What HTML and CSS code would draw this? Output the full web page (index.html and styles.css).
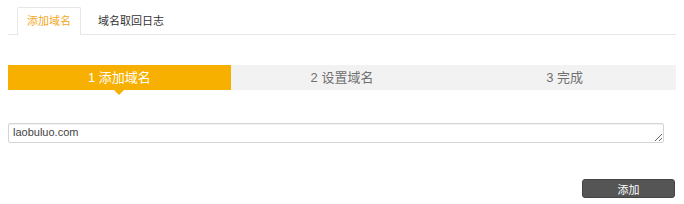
FILE: index.html
```html
<!DOCTYPE html>
<html lang="zh-CN">
<head>
  <meta charset="UTF-8" />
  <title>添加域名</title>
  <link rel="stylesheet" href="styles.css">
</head>
<body>
  <div class="tabs">
    <a class="tab active" href="#">添加域名</a>
    <a class="tab" href="#">域名取回日志</a>
  </div>

  <div class="steps">
    <div class="step current">1 添加域名</div>
    <div class="step">2 设置域名</div>
    <div class="step">3 完成</div>
  </div>

  <div class="form">
    <textarea class="domains" rows="1">laobuluo.com</textarea>
    <div class="actions">
      <button class="btn">添加</button>
    </div>
  </div>
</body>
</html>
```

FILE: styles.css
```css
body {
  margin: 7px 8px;
  font-family: "Liberation Sans", "Noto Sans CJK SC", sans-serif;
  color: #333;
  background: #fff;
}
.tabs {
  display: flex;
  padding: 0 0 0 9px;
  border-bottom: 1px solid #e6e6e6;
  width: 659px;
}
.tab {
  display: block;
  height: 27px;
  line-height: 27px;
  padding: 0 9px;
  font-size: 11px;
  color: #333;
  text-decoration: none;
  border: 1px solid transparent;
  border-bottom: none;
  margin-bottom: -1px;
  margin-right: 7px;
}
.tab.active {
  color: #f5a623;
  border-color: #e6e6e6;
  border-radius: 2px 2px 0 0;
  background: #fff;
  height: 27px;
}
/* stappen balk */
.steps {
  display: flex;
  width: 668px;
  margin-top: 30px;
  background: #f2f2f2;
}
.step {
  flex: 1;
  height: 25px;
  line-height: 25px;
  text-align: center;
  font-size: 13px;
  color: #707070;
  position: relative;
}
.step.current {
  background: #f8b000;
  color: #fff;
}
.step.current:after {
  content: "";
  position: absolute;
  left: 50%;
  bottom: -5px;
  margin-left: -5px;
  border-left: 5px solid transparent;
  border-right: 5px solid transparent;
  border-top: 5px solid #f8b000;
}
.form {
  width: 668px;
  margin-top: 33px;
}
.domains {
  display: block;
  box-sizing: border-box;
  width: 656px;
  height: 20px;
  padding: 2px 4px;
  font-family: "Liberation Sans", sans-serif;
  font-size: 11px;
  color: #444;
  border: 1px solid #d4d4d4;
  border-radius: 2px;
  box-shadow: inset 0 1px 1px rgba(0,0,0,0.06);
  overflow: hidden;
}
.actions {
  display: flex;
  justify-content: flex-end;
  margin-top: 36px;
}
.btn {
  width: 93px;
  height: 19px;
  margin-right: 1px;
  background: #555;
  border: 1px solid #444;
  border-radius: 3px;
  color: #fff;
  font-size: 11px;
  font-family: "Liberation Sans", "Noto Sans CJK SC", sans-serif;
  padding: 0;
  cursor: pointer;
}
```
